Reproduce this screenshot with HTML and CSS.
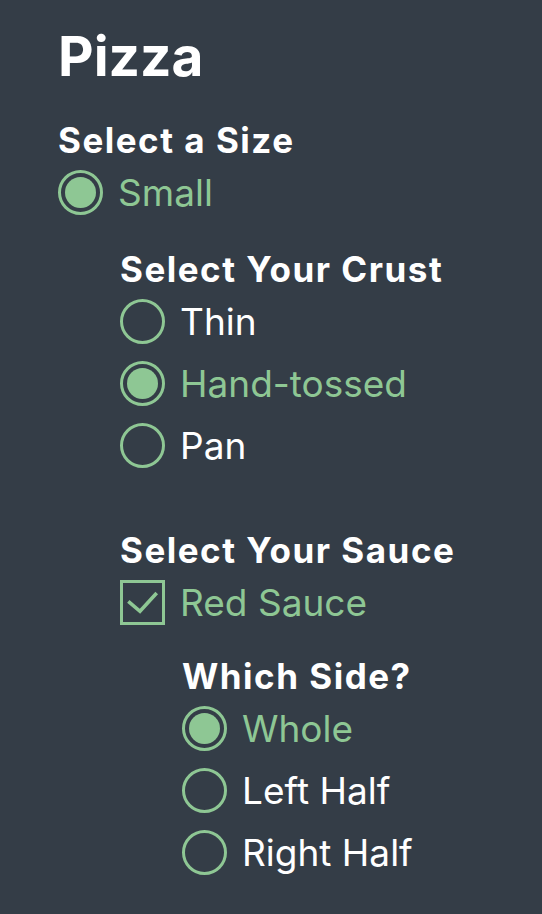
FILE: index.html
```html
<!DOCTYPE html>
<html lang="en">
<head>
<meta charset="utf-8">
<title>Pizza</title>
<link rel="stylesheet" href="styles.css">
</head>
<body>
<main class="page">
  <h1 class="title">Pizza</h1>
  <section class="group first">
    <h2 class="heading">Select a Size</h2>
    <div class="options">
      <label class="opt is-checked"><span class="radio"></span><span class="opt-label">Small</span></label>
    </div>
    <section class="group nested crust">
      <h2 class="heading">Select Your Crust</h2>
      <div class="options">
        <label class="opt"><span class="radio"></span><span class="opt-label">Thin</span></label>
        <label class="opt is-checked"><span class="radio"></span><span class="opt-label">Hand-tossed</span></label>
        <label class="opt"><span class="radio"></span><span class="opt-label">Pan</span></label>
      </div>
    </section>
    <section class="group nested sauce">
      <h2 class="heading">Select Your Sauce</h2>
      <div class="options">
        <label class="opt is-checked"><span class="checkbox"><svg viewBox="0 0 39 39" width="39" height="39"><path d="M5.3 18.3 L17 28.3 L33.7 10" fill="none" stroke="currentColor" stroke-width="3.6" stroke-linecap="butt" stroke-linejoin="miter"/></svg></span><span class="opt-label">Red Sauce</span></label>
      </div>
      <section class="group nested side">
        <h2 class="heading">Which Side?</h2>
        <div class="options">
          <label class="opt is-checked"><span class="radio"></span><span class="opt-label">Whole</span></label>
          <label class="opt"><span class="radio"></span><span class="opt-label">Left Half</span></label>
          <label class="opt"><span class="radio"></span><span class="opt-label">Right Half</span></label>
        </div>
      </section>
    </section>
  </section>
</main>
</body>
</html>
```
FILE: styles.css
```css
html, body {
  margin: 0;
  padding: 0;
  background: #343d47;
}
body {
  font-family: Inter, "Liberation Sans", sans-serif;
  color: #ffffff;
}
.page {
  padding: 23px 0 0 58px;
}
.title {
  margin: 0;
  font-size: 55px;
  font-weight: 700;
  line-height: 66px;
}
.group {
  display: flex;
  flex-direction: column;
}
.first {
  margin-top: 30px;
}
.heading {
  margin: 0;
  font-size: 35px;
  font-weight: 700;
  line-height: 42px;
  letter-spacing: 1.5px;
}
.nested {
  margin-left: 62px;
}
.crust {
  margin-top: 33px;
}
.sauce {
  margin-top: 61px;
}
.side {
  margin-top: 30px;
}
.options {
  display: flex;
  flex-direction: column;
  gap: 17px;
  margin-top: 9px;
}
.opt {
  display: flex;
  align-items: center;
  gap: 15px;
  height: 45px;
  font-size: 37px;
  color: #ffffff;
}
.opt.is-checked {
  color: #8ec794;
}
.radio {
  box-sizing: border-box;
  width: 45px;
  height: 45px;
  border: 3px solid #8ec794;
  border-radius: 50%;
  flex: none;
  display: flex;
  align-items: center;
  justify-content: center;
}
.is-checked .radio::after {
  content: "";
  width: 31px;
  height: 31px;
  border-radius: 50%;
  background: #8ec794;
}
.checkbox {
  box-sizing: border-box;
  width: 45px;
  height: 45px;
  border: 3px solid #8ec794;
  flex: none;
  color: #8ec794;
  display: flex;
  align-items: center;
  justify-content: center;
}
.checkbox svg {
  display: block;
  width: 39px;
  height: 39px;
}
```
